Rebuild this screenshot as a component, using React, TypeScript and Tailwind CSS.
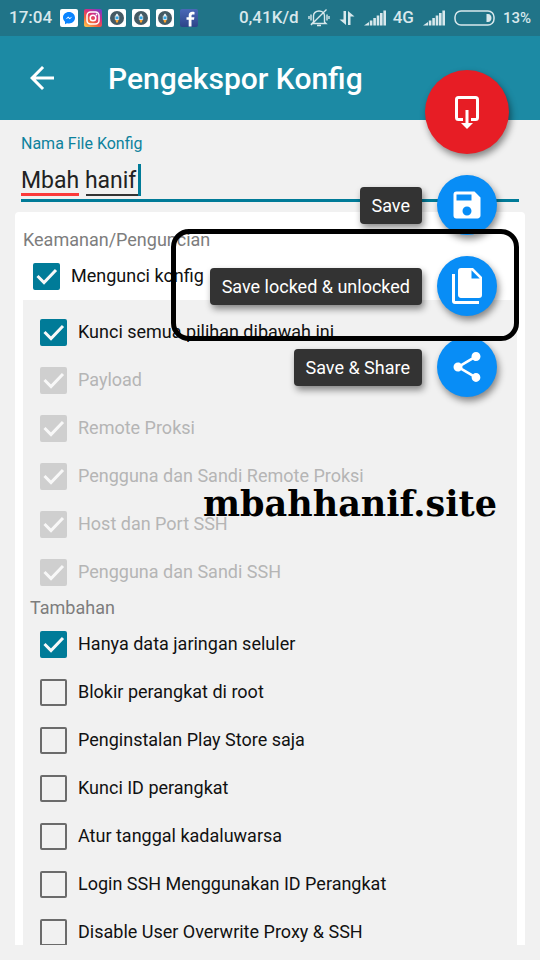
import { useState } from "react";
import { MdArrowBack, MdSave, MdShare } from "react-icons/md";

const lockOptions = [
  "Payload",
  "Remote Proksi",
  "Pengguna dan Sandi Remote Proksi",
  "Host dan Port SSH",
  "Pengguna dan Sandi SSH",
];

const extraOptions = [
  "Blokir perangkat di root",
  "Penginstalan Play Store saja",
  "Kunci ID perangkat",
  "Atur tanggal kadaluwarsa",
  "Login SSH Menggunakan ID Perangkat",
  "Disable User Overwrite Proxy & SSH",
];

function CheckRow({ label, checked = false, disabled = false }: { label: string; checked?: boolean; disabled?: boolean }) {
  return (
    <label className="flex h-12 shrink-0 items-center gap-[11px] text-lg text-[#111] has-disabled:text-[#b5b5b5]">
      <span className="grid">
        <input
          type="checkbox"
          defaultChecked={checked}
          disabled={disabled}
          className="peer col-start-1 row-start-1 size-[27px] appearance-none rounded-[2px] border-2 border-[#6b6b6b] checked:border-[#007b98] checked:bg-[#007b98] disabled:border-[#cfcfcf] disabled:bg-[#cfcfcf]"
        />
        <svg
          viewBox="0 0 27 27"
          className="pointer-events-none invisible col-start-1 row-start-1 size-[27px] peer-checked:visible"
          fill="none"
          stroke="#f8f8f8"
          strokeWidth="3"
        >
          <path d="M4.500 13l6.500 6.500L23 7" />
        </svg>
      </span>
      {label}
    </label>
  );
}

function MessengerIcon() {
  return (
    <svg viewBox="0 0 18 18" className="size-[18px]">
      <rect width="18" height="18" rx="2" fill="#fff" />
      <path d="M9 3C5.600 3 3 5.400 3 8.500c0 1.700.8 3.200 2 4.200V15.300l2-1.100c.6.2 1.300.3 2 .3 3.400 0 6-2.500 6-5.700S12.400 3 9 3z" fill="#0a84ff" />
      <path d="M5.500 10.300L8.200 7.500l1.500 1.400 2.800-1.400-2.700 2.800-1.500-1.400z" fill="#fff" />
    </svg>
  );
}

function InstagramIcon() {
  return (
    <svg viewBox="0 0 18 18" className="size-[18px]">
      <defs>
        <linearGradient id="insta" x1="0.1" y1="1" x2="0.8" y2="0">
          <stop offset="0" stopColor="#fdc74f" />
          <stop offset="0.35" stopColor="#f2603c" />
          <stop offset="0.65" stopColor="#d62e80" />
          <stop offset="1" stopColor="#7b3cc4" />
        </linearGradient>
      </defs>
      <rect width="18" height="18" rx="2" fill="url(#insta)" />
      <g fill="none" stroke="#fff" strokeWidth="1.5">
        <rect x="3" y="3" width="12" height="12" rx="3.500" />
        <circle cx="9" cy="9" r="2.800" />
      </g>
      <circle cx="12.500" cy="5.500" r="0.900" fill="#fff" />
    </svg>
  );
}

function RocketIcon() {
  return (
    <svg viewBox="0 0 18 18" className="size-[18px]">
      <rect width="18" height="18" rx="2" fill="#fff" />
      <circle cx="9" cy="9" r="7" fill="#455a64" />
      <rect x="6.500" y="6.500" width="5" height="4.500" rx="1" fill="#7d929c" />
      <path d="M9 4.500c1.300 1 1.700 2.500 1.700 4V11H7.300V8.500c0-1.500.4-3 1.700-4z" fill="#e8f1f5" />
      <circle cx="9" cy="8.800" r="1.500" fill="#2fa8ea" />
      <path d="M7.500 11h3l-.6 2.500H8.100z" fill="#ffa32e" />
    </svg>
  );
}

function FacebookIcon() {
  return (
    <svg viewBox="0 0 18 18" className="size-[18px]">
      <defs>
        <linearGradient id="fb" x1="0" y1="0" x2="0" y2="1">
          <stop offset="0" stopColor="#4a68b8" />
          <stop offset="1" stopColor="#2d4589" />
        </linearGradient>
      </defs>
      <rect width="18" height="18" rx="2" fill="url(#fb)" />
      <path d="M8.700 17.500V10.800H6.500V8.200h2.200V6.500c0-2.400 1.400-3.700 3.600-3.700.9 0 1.900.1 2.200.2v2.500h-1.500c-1.200 0-1.500.6-1.500 1.400v1.300h2.900l-.4 2.600h-2.500v6.700z" fill="#fff" />
    </svg>
  );
}

function SilentIcon() {
  return (
    <svg viewBox="0 0 22 20" className="h-5 w-[22px]" fill="none" stroke="currentColor" strokeWidth="1.400">
      <path d="M5.500 14V8c0-3 2.300-5 5.500-5s5.500 2 5.500 5v6l1.500 1.500H4zM9 17.500h4M3 17L18.500 1.500" />
      <path d="M3 6.500v6M1 8v3M19 6.500v6M21 8v3" />
    </svg>
  );
}

function DataArrows() {
  return (
    <svg viewBox="0 0 16 16" className="size-4" fill="currentColor">
      <path d="M4.500 1h2.500v14L0.500 9.500h4zM9 15V1l6.500 5.500h-4V15z" />
    </svg>
  );
}

function SignalIcon() {
  return (
    <svg viewBox="0 0 22 16" className="h-4 w-[22px]" fill="currentColor">
      <path d="M0 15.500l5-3.500v3.500zM5.800 10.500h2.600v5H5.800zM9.300 8h2.600v7.500H9.300zM12.700 5.500h2.600v10h-2.600zM16 3h2.600v12.500H16zM19.400 0.500H22v15h-2.600z" />
    </svg>
  );
}

function BatteryIcon() {
  return (
    <svg viewBox="0 0 41 16" className="h-4 w-[41px]">
      <rect x="1" y="1" width="39" height="14" rx="6" fill="none" stroke="currentColor" strokeWidth="1.500" />
      <path d="M32.500 4h1.500c2.200 0 3.500 1.800 3.500 4S36.200 12 34 12h-1.500z" fill="currentColor" />
    </svg>
  );
}

function ExportIcon() {
  return (
    <svg viewBox="0 0 36 36" className="size-9" fill="none" stroke="#fff" strokeWidth="3">
      <path d="M14 25.500H9.500a2 2 0 0 1-2-2V5.500a2 2 0 0 1 2-2h17a2 2 0 0 1 2 2v18a2 2 0 0 1-2 2H22M18 16v15" />
      <path d="M12 29h12l-6 6z" fill="#fff" stroke="none" />
    </svg>
  );
}

function FilesIcon() {
  return (
    <svg viewBox="0 0 24 24" className="size-9" fill="currentColor">
      <path d="M15 7h5.500L15 1.500V7M8 0h8l6 6v12a2 2 0 0 1-2 2H8c-1.110 0-2-.9-2-2V2a2 2 0 0 1 2-2M4 4v18h16v2H4a2 2 0 0 1-2-2V4h2z" />
    </svg>
  );
}

const actions = [
  { label: "Save", icon: <MdSave size={36} /> },
  { label: "Save locked & unlocked", icon: <FilesIcon /> },
  { label: "Save & Share", icon: <MdShare size={36} /> },
];

function ActionMenu() {
  return (
    <div className="absolute top-[70px] right-[31px] flex flex-col items-end gap-[21px]">
      <button aria-label="Export" className="flex size-[84px] items-center justify-center rounded-full bg-[#e71d25] shadow-[2px_4px_7px_rgba(0,0,0,0.45)]">
        <ExportIcon />
      </button>
      {actions.map((action) => (
        <button key={action.label} className="flex items-center gap-[15px] pr-3 text-lg text-white">
          <span className="rounded-[4px] bg-[#333] px-3 py-1 leading-[29px] shadow-[2px_4px_7px_rgba(0,0,0,0.45)]">{action.label}</span>
          <span className="flex size-[60px] items-center justify-center rounded-full bg-[#088df6] shadow-[2px_4px_7px_rgba(0,0,0,0.45)]">
            {action.icon}
          </span>
        </button>
      ))}
    </div>
  );
}

export default function App() {
  const [fileName, setFileName] = useState("Mbah hanif");

  return (
    <div className="relative flex h-screen flex-col overflow-hidden bg-[#f1f1f1] font-['Roboto',sans-serif]">
      <div className="flex h-9 shrink-0 items-center justify-between bg-[#207488] px-[9px] text-[17px] font-medium text-[#d8e8ec]">
        <div className="flex items-center gap-[6px]">
          <span className="pr-[2px]">17:04</span>
          <MessengerIcon />
          <InstagramIcon />
          <RocketIcon />
          <RocketIcon />
          <RocketIcon />
          <FacebookIcon />
        </div>
        <div className="flex items-center gap-[9px]">
          <span>0,41K/d</span>
          <SilentIcon />
          <DataArrows />
          <div className="flex items-center gap-[7px]">
            <SignalIcon />
            <span>4G</span>
          </div>
          <SignalIcon />
          <div className="flex items-center gap-2">
            <BatteryIcon />
            <span className="text-[15px]">13%</span>
          </div>
        </div>
      </div>

      <header className="flex h-[84px] shrink-0 items-center gap-12 bg-[#1c8aa4] px-6 text-white">
        <button aria-label="Back">
          <MdArrowBack size={36} />
        </button>
        <h1 className="text-[30px] font-medium">Pengekspor Konfig</h1>
      </header>

      <main className="flex min-h-0 flex-1 flex-col px-[15px] pt-3 pb-[15px]">
        <div className="flex flex-col gap-1 px-[6px]">
          <label htmlFor="file-name" className="text-base leading-6 text-[#0d829d]">
            Nama File Konfig
          </label>
          <div className="relative">
            <input
              id="file-name"
              type="text"
              value={fileName}
              onChange={(e) => setFileName(e.target.value)}
              className="block h-[42px] w-full border-b-3 border-[#007b98] pt-[2px] text-[23px] text-[#222] outline-none"
            />
            {/* spelling marks and caret */}
            <div className="pointer-events-none absolute top-1 left-0 flex h-8 items-end">
              <span className="mr-[7px] h-[3px] w-[58px] bg-[#fb3a3a]" />
              <span className="h-[2px] w-[52px] bg-[#333]" />
              <span className="h-8 w-[3px] bg-[#007b98]" />
            </div>
          </div>
        </div>

        <section className="mt-[10px] flex min-h-0 flex-1 flex-col overflow-hidden rounded-t-[4px] bg-white px-2 pt-4">
          <h2 className="shrink-0 text-lg leading-6 text-[#7d7d7d]">Keamanan/Penguncian</h2>
          <div className="px-[10px]">
            <CheckRow label="Mengunci konfig" checked />
          </div>
          <div className="flex min-h-0 flex-1 flex-col overflow-hidden bg-[#f1f1f1] pt-2">
            <div className="px-[17px]">
              <CheckRow label="Kunci semua pilihan dibawah ini" checked />
              {lockOptions.map((option) => (
                <CheckRow key={option} label={option} checked disabled />
              ))}
            </div>
            <h2 className="px-[7px] text-lg leading-6 text-[#7d7d7d]">Tambahan</h2>
            <div className="px-[17px]">
              <CheckRow label="Hanya data jaringan seluler" checked />
              {extraOptions.map((option) => (
                <CheckRow key={option} label={option} />
              ))}
            </div>
          </div>
        </section>
      </main>

      <ActionMenu />
      <div className="pointer-events-none absolute top-[229px] right-[21px] h-[112px] w-[348px] rounded-[18px] border-5 border-black" />
      <p className="pointer-events-none absolute top-[484px] right-[43px] font-['DejaVu_Serif',serif] text-[35px] leading-10 font-bold text-black">
        mbahhanif.site
      </p>
    </div>
  );
}
